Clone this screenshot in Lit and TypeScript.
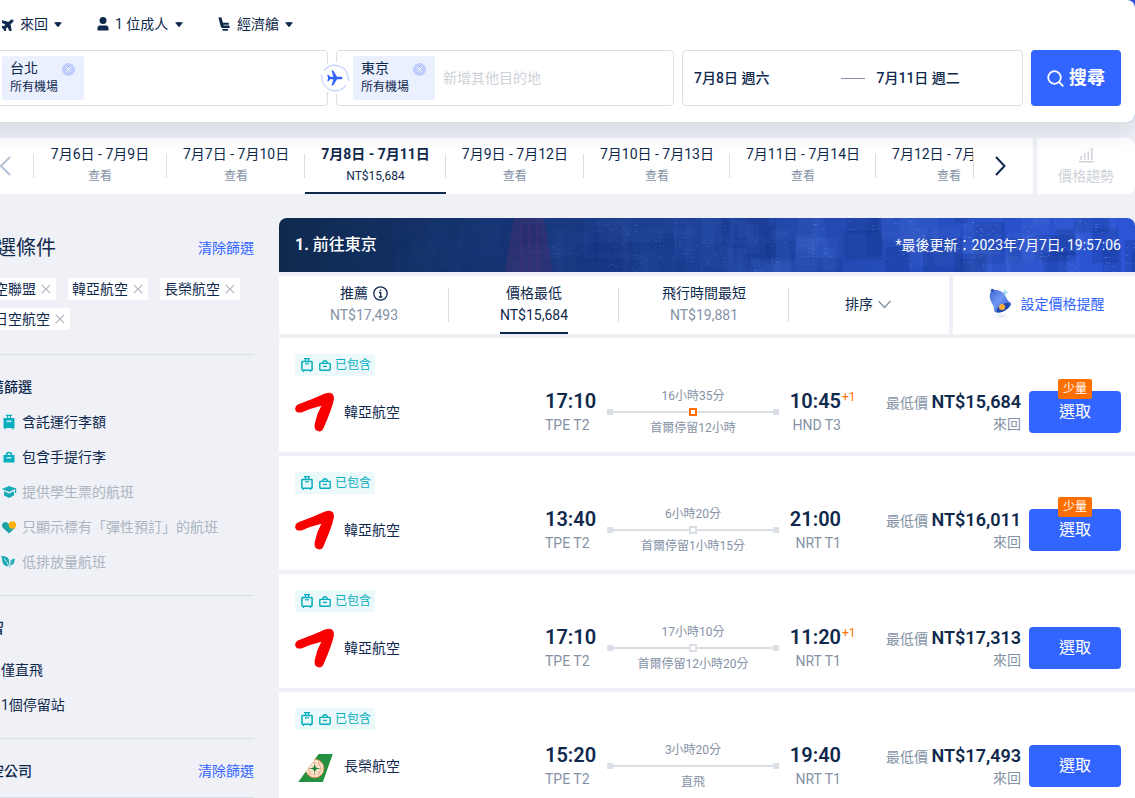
import { LitElement, html, css, svg, nothing } from "lit";
import { customElement, property, state } from "lit/decorators.js";
import { classMap } from "lit/directives/class-map.js";

interface Flight {
  airline: string;
  logo: "asiana" | "eva";
  depart: string;
  from: string;
  arrive: string;
  to: string;
  nextDay: boolean;
  duration: string;
  stop: string;
  stopKind: "long" | "short" | "none";
  price: string;
  few: boolean;
}

const flights: Flight[] = [
  { airline: "韓亞航空", logo: "asiana", depart: "17:10", from: "TPE T2", arrive: "10:45", to: "HND T3", nextDay: true, duration: "16小時35分", stop: "首爾停留12小時", stopKind: "long", price: "NT$15,684", few: true },
  { airline: "韓亞航空", logo: "asiana", depart: "13:40", from: "TPE T2", arrive: "21:00", to: "NRT T1", nextDay: false, duration: "6小時20分", stop: "首爾停留1小時15分", stopKind: "short", price: "NT$16,011", few: true },
  { airline: "韓亞航空", logo: "asiana", depart: "17:10", from: "TPE T2", arrive: "11:20", to: "NRT T1", nextDay: true, duration: "17小時10分", stop: "首爾停留12小時20分", stopKind: "short", price: "NT$17,313", few: false },
  { airline: "長榮航空", logo: "eva", depart: "15:20", from: "TPE T2", arrive: "19:40", to: "NRT T1", nextDay: false, duration: "3小時20分", stop: "直飛", stopKind: "none", price: "NT$17,493", few: false },
];

const base = css`
  * { box-sizing: border-box; }
  button, input, select {
    font: inherit;
    color: inherit;
    border: 0;
    background: none;
    padding: 0;
    margin: 0;
  }
  button { cursor: pointer; white-space: nowrap; }
  svg { display: block; flex: none; }
  ul { list-style: none; margin: 0; padding: 0; }
  h1, h2, h3, p { margin: 0; font-size: inherit; font-weight: inherit; }
`;

const suitcaseOutline = svg`<svg width="12" height="14" viewBox="0 0 12 14" fill="none" stroke="#06aebd">
  <path d="M3 .6h6M4.5.6v3M7.5.6v3M2.5 12v2M9.5 12v2" stroke-width="1.2"/>
  <rect x=".9" y="3.4" width="10.2" height="8.8" rx=".6" stroke-width="1.5"/>
  <path d="M4 5.8h4" stroke-width="1.2"/></svg>`;
const bagOutline = svg`<svg width="12" height="11" viewBox="0 0 12 11" fill="none" stroke="#06aebd">
  <rect x=".8" y="3.4" width="10.4" height="6.8" rx=".6" stroke-width="1.4"/>
  <path d="M3.6 3.2C3.6 0 8.4 0 8.4 3.2" stroke-width="1.4"/><path d="M4 6.4h4" stroke-width="1.3"/></svg>`;

const asianaLogo = svg`<svg width="40" height="40" viewBox="0 0 40 40"><path fill="#f90000" d="M2.8 12.5Q16 8 30 1.6Q39-1.4 39 7Q37 17 28.6 36Q26.6 41 21.4 38.6Q18.6 36.6 20 31Q21.6 22 26.4 13.8Q15 16.6 6.4 20.4Q1.4 21.4.2 17.4Q-.2 14 2.8 12.5Z"/></svg>`;
const evaLogo = svg`<svg width="40" height="40" viewBox="0 0 40 40">
  <defs><clipPath id="tail"><path d="M3 36L23.500 8H38L28 36Z"/></clipPath></defs>
  <g clip-path="url(#tail)"><path fill="#23913f" d="M3 36L23.500 8H38L28 36Z"/>
  <circle cx="19.700" cy="22.500" r="9.300" fill="#fbeadb" stroke="#e8803c" stroke-width=".8"/>
  <g fill="none" stroke="#eda878" stroke-width=".7"><circle cx="19.700" cy="22.500" r="6"/><path d="M13 16L26.400 29M26.400 16L13 29M19.700 13V32M10.500 22.500H29M16 14Q12 22 16 31M23 14Q28 22 23 31"/></g>
  <path fill="#16833a" d="M19.700 17.500L20.700 21.500L24.700 22.500L20.700 23.500L19.700 27.500L18.700 23.500L14.700 22.500L18.700 21.500Z"/></g></svg>`;

@customElement("flight-card")
export class FlightCard extends LitElement {
  @property({ attribute: false }) flight!: Flight;

  static styles = [base, css`
    :host { display: block; background: #fff; padding: 16px 14px 15px 16px; }
    .perks {
      display: inline-flex;
      align-items: center;
      gap: 6px;
      height: 22px;
      padding: 0 4px 0 6px;
      border-radius: 2px;
      background: #ebf9fa;
      color: #06aebd;
      font-size: 12px;
      line-height: 22px;
      vertical-align: top;
    }
    .perks span { margin-left: -2px; }
    .row {
      display: grid;
      grid-template-columns: minmax(0, 1fr) 62px 172px 62px 188px 92px;
      align-items: center;
      margin-top: 11px;
      min-height: 50px;
    }
    .airline { display: flex; align-items: center; gap: 9px; line-height: 20px; }
    .time { font-size: 20px; font-weight: 600; line-height: 24px; margin-bottom: 2px; position: relative; }
    .port { color: #8592a6; line-height: 20px; }
    .arrive { text-align: right; }
    .plus {
      position: absolute;
      left: 100%;
      top: 0;
      margin-left: 1px;
      font-size: 12px;
      font-weight: 400;
      line-height: 16px;
      color: #ff6f00;
    }
    .path { text-align: center; font-size: 12px; line-height: 18px; color: #8592a6; }
    .track { display: flex; align-items: center; height: 14px; }
    .end { width: 6px; height: 6px; background: #dadfe6; }
    .line { flex: 1; height: 2px; background: #dadfe6; }
    .stop { width: 8px; height: 8px; background: #fff; border: 2px solid #dadfe6; }
    .stop.long { border-color: #ff6f00; }
    .fare { text-align: right; color: #8592a6; white-space: nowrap; padding-right: 8px; line-height: 20px; }
    .amount { line-height: 22px; }
    .amount strong { color: #0f294d; font-size: 18px; font-weight: 600; }
    .action { position: relative; }
    .select {
      width: 100%;
      height: 42px;
      border-radius: 4px;
      background: #3264ff;
      color: #fff;
      font-size: 16px;
    }
    .few {
      position: absolute;
      top: -12px;
      left: 50%;
      transform: translateX(-50%);
      padding: 0 5px;
      border-radius: 2px;
      background: #ff6f00;
      color: #fff;
      font-size: 12px;
      line-height: 20px;
      white-space: nowrap;
    }
  `];

  render() {
    const f = this.flight;
    return html`
      <div class="perks">${suitcaseOutline}${bagOutline}<span>已包含</span></div>
      <div class="row">
        <div class="airline">${f.logo === "asiana" ? asianaLogo : evaLogo}<span>${f.airline}</span></div>
        <div>
          <div class="time">${f.depart}</div>
          <div class="port">${f.from}</div>
        </div>
        <div class="path">
          <div>${f.duration}</div>
          <div class="track">
            <span class="end"></span><span class="line"></span>
            ${f.stopKind === "none" ? nothing : html`<span class=${classMap({ stop: true, long: f.stopKind === "long" })}></span><span class="line"></span>`}
            <span class="end"></span>
          </div>
          <div>${f.stop}</div>
        </div>
        <div class="arrive">
          <div class="time">${f.arrive}${f.nextDay ? html`<span class="plus">+1</span>` : nothing}</div>
          <div class="port">${f.to}</div>
        </div>
        <div class="fare">
          <div class="amount">最低價 <strong>${f.price}</strong></div>
          <div>來回</div>
        </div>
        <div class="action">
          <button class="select" type="button">選取</button>
          ${f.few ? html`<span class="few">少量</span>` : nothing}
        </div>
      </div>
    `;
  }
}

const planeUp = svg`<path d="M8 .5C8.900.5 9.200 1.600 9.200 2.500V6L15.500 9.800V11.500L9.200 9.600V13L11.200 14.500V15.700L8 14.900L4.800 15.700V14.500L6.800 13V9.600L.5 11.500V9.800L6.800 6V2.500C6.800 1.600 7.100.5 8 .5Z"/>`;
const caret = svg`<svg class="caret" width="8" height="5" viewBox="0 0 8 5" fill="#0f294d"><path d="M0 .4Q4-.3 8 .4L4.500 4.700Q4 5.200 3.500 4.700Z"/></svg>`;
const cross = svg`<svg width="10" height="10" viewBox="0 0 10 10" stroke="#acb4bf" stroke-width="1.200"><path d="M.8.8L9.200 9.200M9.200.8L.8 9.200"/></svg>`;
const clearIcon = svg`<svg width="13" height="13" viewBox="0 0 13 13"><circle cx="6.500" cy="6.500" r="6.500" fill="#c0ceff"/><path d="M4.300 4.300L8.700 8.700M8.700 4.300L4.300 8.700" stroke="#fff" stroke-width="1"/></svg>`;

const tripOptions = [
  { label: "行程類型", value: "來回", icon: svg`<svg width="12" height="13" viewBox="1 1 14 14" fill="#0f294d"><g transform="rotate(48 8 8)" stroke="#0f294d" stroke-width="1.200">${planeUp}</g></svg>` },
  { label: "旅客", value: "1 位成人", icon: svg`<svg width="12" height="14" viewBox="0 0 12 14" fill="#0f294d"><circle cx="6" cy="3.600" r="3.500"/><path d="M.5 13.500V11Q.5 8.500 3 8.500H9Q11.500 8.500 11.500 11V13.500Z"/></svg>` },
  { label: "艙等", value: "經濟艙", icon: svg`<svg width="13" height="14" viewBox="0 0 13 14" fill="#0f294d"><path d="M.4.6L3.400 .3L4.900 5.800H10.800V7.800H5.400L5.700 8.600H11.600V10.900H4.600Q3.200 10.900 2.700 9.400Z"/><path d="M4 11.900H10.400L9.600 13.700H5Z"/></svg>` },
];

const dates = [
  ["7月6日 - 7月9日", "查看"],
  ["7月7日 - 7月10日", "查看"],
  ["7月8日 - 7月11日", "NT$15,684"],
  ["7月9日 - 7月12日", "查看"],
  ["7月10日 - 7月13日", "查看"],
  ["7月11日 - 7月14日", "查看"],
  ["7月12日 - 7月15日", "查看"],
];

const recommended = [
  { text: "含託運行李額", off: false, icon: svg`<svg width="16" height="16" viewBox="0 0 16 16" fill="#06aebd"><path d="M5 .8H11V2H10V4H13.500V14H12.500V15.200H11V14H5V15.200H3.500V14H2.500V4H6V2H5ZM7.200 2V4H8.800V2Z"/><rect x="5.500" y="6.500" width="5" height="1.600" fill="#c8eef2"/></svg>` },
  { text: "包含手提行李", off: false, icon: svg`<svg width="16" height="16" viewBox="0 0 16 16" fill="#06aebd"><path d="M2.500 6H13.500V13.500H2.500Z"/><path d="M5.500 6Q5.500 3.500 8 3.500Q10.500 3.500 10.500 6" fill="none" stroke="#06aebd" stroke-width="1.600"/><rect x="5.500" y="8" width="5" height="1.500" fill="#c8eef2"/></svg>` },
  { text: "提供學生票的航班", off: true, icon: svg`<svg width="16" height="16" viewBox="0 0 16 16" fill="#19a9b5"><path d="M.8 5L8 2L15.200 4.600L8 8Z"/><path d="M3 7.200L8 9.400L13 7.200V11.500L8 14L3 11.500Z"/><path d="M14 4.600H15.200V9H14Z"/></svg>` },
  { text: "只顯示標有「彈性預訂」的航班", off: true, icon: svg`<svg width="16" height="16" viewBox="0 0 16 16"><path fill="#1fa3a5" d="M2.200 4Q4.500 1.500 8 5L14 9L8 14.500L2 9Q-.4 6.500 2.200 4Z"/><circle cx="11.400" cy="6" r="3.700" fill="#ffb00f"/></svg>` },
  { text: "低排放量航班", off: true, icon: svg`<svg width="16" height="16" viewBox="0 0 16 16" fill="#19a9b5"><path d="M0 2Q7 2 8 6Q8.800 10 7.500 12.500Q2 12 1.400 7.500Q1.400 4 0 2Z"/><path d="M14 4.500Q9.500 5 9.300 8.500Q9 10 9.400 11.500Q13.500 10.500 13.300 7Z"/><path d="M3 4.500Q7 8 8.300 14" fill="none" stroke="#eff1f6" stroke-width=".8"/><path d="M8.600 14V11L12 7" fill="none" stroke="#7ccdd3" stroke-width=".8"/></svg>` },
];

const sorts = [
  { name: "推薦", price: "NT$17,493", info: true },
  { name: "價格最低", price: "NT$15,684", info: false },
  { name: "飛行時間最短", price: "NT$19,881", info: false },
];

/** Night skyline for the results banner: overlapping blocks with scattered lit windows. */
function skyline() {
  let seed = 11;
  const next = () => (seed = (seed * 16807) % 2147483647) / 2147483647;
  const parts: unknown[] = [];
  for (let i = 0; i < 110; i++) {
    const x = 60 + next() * 800;
    const w = 8 + next() * 36;
    const top = next() * 54 - 12;
    const h = 12 + next() * 40;
    const strength = Math.min(1, x / 620);
    const dark = next() > 0.45;
    parts.push(svg`<rect x=${x} y=${top} width=${w} height=${h} fill=${dark ? "#0c2a78" : "#5f86ee"} opacity=${(dark ? 0.2 : 0.1) * strength}/>`);
    if (next() > 0.35) {
      const step = 3 + Math.floor(next() * 3);
      for (let y = Math.round(top) + 3; y < top + h; y += step) {
        for (let c = Math.round(x) + 1; c < x + w - 3; c += 4) {
          if (next() > 0.72) parts.push(svg`<rect x=${c} y=${y} width=${1 + next() * 2} height="1" fill="#a9c0ff" opacity=${(0.06 + next() * 0.24) * strength}/>`);
        }
      }
    }
  }
  return svg`<svg class="skyline" viewBox="0 0 856 54" preserveAspectRatio="xMidYMid slice" aria-hidden="true">
    ${parts}
    <path d="M235 0H265L274 54H226Z" fill="#5a2a6a" opacity=".32"/>
    <path d="M242 0V54M250 0V54M258 0V54M232 16H268M230 34H271" stroke="#8a3d70" opacity=".18"/>
  </svg>`;
}

const bell = svg`<svg width="26" height="34" viewBox="0 0 26 34">
  <defs><linearGradient id="bell" x1="0" y1="0" x2="1" y2="1"><stop offset="0" stop-color="#3f66cf"/><stop offset=".45" stop-color="#7096f5"/><stop offset="1" stop-color="#2450be"/></linearGradient>
  <radialGradient id="shade"><stop offset="0" stop-color="#ccd3e6" stop-opacity=".6"/><stop offset="1" stop-color="#fff" stop-opacity="0"/></radialGradient></defs>
  <ellipse cx="13" cy="29" rx="12" ry="5" fill="url(#shade)"/>
  <path fill="url(#bell)" d="M3 4Q5 2.500 9 3Q16 4 18.500 11Q19.500 14.500 22.500 15.500Q24 17 21.500 20Q16 26 8.500 25.500Q6 25 6 23Q6.500 20 4 16.500Q0 10 3 4Z"/>
  <ellipse cx="15" cy="20.800" rx="7.500" ry="3.200" transform="rotate(-32 15 20.800)" fill="#2448ac"/>
  <circle cx="14" cy="20" r="3" fill="#f9ae3c"/><circle cx="4.500" cy="3.500" r="1.800" fill="#3459b8"/>
  <path d="M17 1.500L17.900 4.600L21 5.500L17.900 6.400L17 9.500L16.100 6.400L13.500 5.500L16.100 4.600Z" fill="#9fdcf7"/></svg>`;

@customElement("app-root")
export class AppRoot extends LitElement {
  @state() private activeDate = 2;
  @state() private activeSort = 1;

  static styles = [base, css`
    :host {
      display: block;
      min-height: 100vh;
      overflow: hidden;
      background: #eff1f6;
      color: #0f294d;
      font-family: Roboto, "Noto Sans CJK TC", sans-serif;
      font-size: 14px;
      line-height: 20px;
    }
    .page { margin-left: -24px; }

    .top { background: #2a54dc; position: relative; z-index: 2; border-radius: 0 0 8px 0; box-shadow: 0 10px 24px rgba(15, 41, 77, 0.12); }
    .search { background: #fff; padding: 8px 14px 16px; border-radius: 0 8px 8px 0; }
    .options { display: flex; gap: 35px; padding-left: 12px; height: 32px; }
    .option { display: flex; align-items: center; gap: 6px; }
    .option select { appearance: none; line-height: 20px; height: 20px; cursor: pointer; }
    .caret { pointer-events: none; }
    .fields { display: grid; grid-template-columns: 338fr 338fr 341fr 90px; gap: 8px; margin-top: 10px; height: 56px; }
    .field { position: relative; display: flex; align-items: center; min-width: 0; border: 1px solid #dadfe6; border-radius: 4px; padding: 0 11px; }
    .field.to { padding-left: 16px; }
    .place { display: flex; flex: none; width: 82px; height: 44px; padding: 2px 9px 2px 8px; gap: 4px; background: #ebf0ff; border-radius: 2px; }
    .place div { width: 48px; white-space: nowrap; line-height: 20px; }
    .place small { display: block; font-size: 12px; line-height: 18px; }
    .place button { align-self: flex-start; margin-top: 5px; }
    .field input { flex: 1; min-width: 0; margin-left: 8px; outline: 0; }
    .field input::placeholder { color: #ced2d9; opacity: 1; }
    .swap { position: absolute; z-index: 1; left: -18px; top: 11px; width: 32px; height: 32px; border-radius: 50%; background: #fff; }
    .field.when { gap: 12px; font-weight: 500; }
    .when button { flex: 1; text-align: left; }
    .dash { width: 24px; height: 1px; background: #8592a6; }
    .go { display: flex; align-items: center; justify-content: center; gap: 5px; border-radius: 4px; background: #3264ff; color: #fff; font-size: 18px; font-weight: 700; }

    .calendar { display: grid; grid-template-columns: minmax(0, 1fr) 98px; gap: 4px; margin-top: 16px; height: 56px; }
    .strip { display: flex; background: #fff; min-width: 0; }
    .prev { flex: none; width: 57px; display: grid; place-items: center; }
    .next { flex: none; width: 60px; display: grid; place-items: center; position: relative; padding-right: 6px; }
    .dates { display: flex; flex: 1; min-width: 0; overflow: hidden; position: relative; }
    .dates::before, .next::before { content: ""; position: absolute; left: 0; top: 16px; width: 1px; height: 24px; background: #dadfe6; }
    .date { position: relative; flex: none; min-width: 134px; height: 56px; padding: 6px 16px; text-align: center; line-height: 20px; border-bottom: 2px solid transparent; }
    .date::after { content: ""; position: absolute; right: 0; top: 16px; width: 1px; height: 24px; background: #dadfe6; }
    .date small { display: block; font-size: 12px; line-height: 24px; color: #8592a6; }
    .date.on { font-weight: 700; border-color: #0f294d; }
    .date.on small { color: #0f294d; font-weight: 400; }
    .trend { background: #fff; border-radius: 0 8px 8px 0; color: #ced2d9; display: flex; flex-direction: column; align-items: center; gap: 3px; padding-top: 10px; }

    .body { display: grid; grid-template-columns: 278px minmax(0, 1fr); gap: 25px; margin-top: 24px; }
    .side { padding-top: 16px; }
    .head { display: flex; justify-content: space-between; align-items: center; }
    .head h2 { font-size: 20px; line-height: 28px; }
    .link { color: #3264ff; text-decoration: none; }
    .chips { display: flex; flex-wrap: wrap; gap: 8px 12px; margin: 16px 0 24px; }
    .chip { display: flex; align-items: center; gap: 5px; height: 22px; padding: 0 5px 0 4px; background: #fff; border-radius: 2px; }
    .group { border-top: 1px solid #dadfe6; padding: 22px 0 16px; }
    .group h3 { font-weight: 500; }
    .group ul { margin-top: 7px; }
    .group.stops ul { margin-top: 14px; }
    .group label { display: flex; align-items: center; height: 35px; }
    .group input { width: 16px; height: 16px; margin-right: 9px; }
    .group label svg { margin-right: 5px; }
    .off { color: #acb4bf; }
    .last { border-top: 1px solid #dadfe6; }

    .results { display: grid; gap: 4px; align-content: start; }
    .banner {
      position: relative;
      display: flex;
      align-items: center;
      justify-content: space-between;
      height: 54px;
      padding: 0 14px 0 16px;
      overflow: hidden;
      border-radius: 8px 8px 0 0;
      background: linear-gradient(90deg, #0f294d 0%, #17367a 30%, #2147a4 55%, #274fc4 80%, #2c55d6 100%);
      color: #fff;
    }
    .skyline { position: absolute; inset: 0; width: 100%; height: 100%; }
    .banner h1 { position: relative; font-size: 16px; font-weight: 700; }
    .banner h1 span { font-weight: 500; }
    .banner p { position: relative; }
    .tools { display: grid; grid-template-columns: minmax(0, 1fr) 182px; gap: 4px; height: 58px; }
    .sorts { display: grid; grid-template-columns: 17fr 17fr 17fr 16fr; background: #fff; }
    .sort { position: relative; display: flex; justify-content: center; }
    .sort::after { content: ""; position: absolute; right: 0; top: 12px; width: 1px; height: 34px; background: #dadfe6; }
    .tab { display: flex; flex-direction: column; align-items: center; gap: 2px; height: 58px; padding-top: 7px; border-bottom: 2px solid transparent; color: #8592a6; }
    .tab span { display: flex; align-items: center; gap: 5px; color: #0f294d; }
    .tab.on { border-color: #0f294d; color: #0f294d; }
    .more { display: flex; align-items: center; justify-content: center; gap: 5px; padding: 0 2px 2px 0; }
    .alert { display: flex; align-items: center; justify-content: center; gap: 7px; background: #fff; color: #3264ff; padding: 0 0 2px 4px; }
  `];

  private place(city: string) {
    return html`<div class="place">
      <div>${city}<small>所有機場</small></div>
      <button type="button" aria-label="移除">${clearIcon}</button>
    </div>`;
  }

  private header() {
    return html`<header class="top"><form class="search" @submit=${(e: Event) => e.preventDefault()}>
      <div class="options">
        ${tripOptions.map((o) => html`<div class="option">${o.icon}<select aria-label=${o.label}><option>${o.value}</option></select>${caret}</div>`)}
      </div>
      <div class="fields">
        <div class="field">${this.place("台北")}<input type="text" aria-label="出發地" /></div>
        <div class="field to">
          <button class="swap" type="button" aria-label="交換">
            <svg width="32" height="32" viewBox="0 0 32 32">
              <path d="M3.200 18A13.200 13.200 0 0 0 27 23M28.800 14A13.200 13.200 0 0 0 5 9M3.200 18L2.400 13M28.800 14L29.600 19" fill="none" stroke="#c5d4ff" stroke-width="1.300"/>
              <g transform="translate(8 8) rotate(90 8 8)" fill="#3264ff">${planeUp}</g>
            </svg>
          </button>
          ${this.place("東京")}<input type="text" aria-label="目的地" placeholder="新增其他目的地" />
        </div>
        <div class="field when">
          <button type="button">7月8日 週六</button><span class="dash"></span><button type="button">7月11日 週二</button>
        </div>
        <button class="go" type="submit">
          <svg width="17" height="17" viewBox="0 0 17 17" fill="none" stroke="#fff" stroke-width="1.800"><circle cx="7.500" cy="7.500" r="6.300"/><path d="M12 12L16.300 16.300"/></svg>搜尋
        </button>
      </div>
    </form></header>`;
  }

  private calendar() {
    return html`<nav class="calendar">
      <div class="strip">
        <button class="prev" type="button" aria-label="較早日期"><svg width="12" height="20" viewBox="0 0 12 20" fill="none" stroke="#b4c2d6" stroke-width="2"><path d="M11 1L2 10L11 19"/></svg></button>
        <div class="dates">
          ${dates.map(([range, sub], i) => html`<button type="button" class=${classMap({ date: true, on: i === this.activeDate })} @click=${() => (this.activeDate = i)}>${range}<small>${sub}</small></button>`)}
        </div>
        <button class="next" type="button" aria-label="較晚日期"><svg width="12" height="20" viewBox="0 0 12 20" fill="none" stroke="#0f294d" stroke-width="2"><path d="M2 1L10.500 10L2 19"/></svg></button>
      </div>
      <button class="trend" type="button">
        <svg width="15" height="15" viewBox="0 0 15 15" fill="#ced2d9"><path d="M0 13H15V14.500H0ZM1.500 8H3V12H1.500ZM5 5H6.500V12H5ZM8.500 3.500H10V12H8.500ZM12 0H13.500V12H12Z"/></svg>
        <span>價格趨勢</span>
      </button>
    </nav>`;
  }

  private filters() {
    return html`<aside class="side">
      <div class="head"><h2>篩選條件</h2><a class="link" href="#">清除篩選</a></div>
      <div class="chips">
        ${["星空聯盟", "韓亞航空", "長榮航空", "全日空航空"].map((c) => html`<span class="chip">${c}<button type="button" aria-label="移除">${cross}</button></span>`)}
      </div>
      <section class="group">
        <h3>推薦篩選</h3>
        <ul>
          ${recommended.map((r) => html`<li><label class=${classMap({ off: r.off })}><input type="checkbox" ?disabled=${r.off} />${r.icon}${r.text}</label></li>`)}
        </ul>
      </section>
      <section class="group stops">
        <h3>停留</h3>
        <ul>
          ${["僅直飛", "1個停留站"].map((s) => html`<li><label><input type="checkbox" />${s}</label></li>`)}
        </ul>
      </section>
      <section class="group">
        <div class="head"><h3>航空公司</h3><a class="link" href="#">清除篩選</a></div>
      </section>
      <div class="last"></div>
    </aside>`;
  }

  render() {
    return html`<div class="page">
      ${this.header()}
      ${this.calendar()}
      <div class="body">
        ${this.filters()}
        <main class="results">
          <div class="banner">${skyline()}<h1>1. <span>前往東京</span></h1><p>*最後更新：2023年7月7日, 19:57:06</p></div>
          <div class="tools">
            <div class="sorts">
              ${sorts.map((s, i) => html`<div class="sort"><button type="button" class=${classMap({ tab: true, on: i === this.activeSort })} @click=${() => (this.activeSort = i)}>
                <span>${s.name}${s.info ? svg`<svg width="15" height="15" viewBox="0 0 15 15" fill="none" stroke="#0f294d" stroke-width="1.300"><circle cx="7.500" cy="7.500" r="6.700"/><path d="M6 6.500H7.700V11M5.800 11H9.400M7.500 3.500V5"/></svg>` : nothing}</span>${s.price}
              </button></div>`)}
              <button class="more" type="button" aria-haspopup="menu">排序<svg width="13" height="9" viewBox="0 0 13 9" fill="none" stroke="#8592a6" stroke-width="1.300"><path d="M.5 1L6.500 7.500L12.500 1"/></svg></button>
            </div>
            <button class="alert" type="button">${bell}設定價格提醒</button>
          </div>
          ${flights.map((f) => html`<flight-card .flight=${f}></flight-card>`)}
        </main>
      </div>
    </div>`;
  }
}
